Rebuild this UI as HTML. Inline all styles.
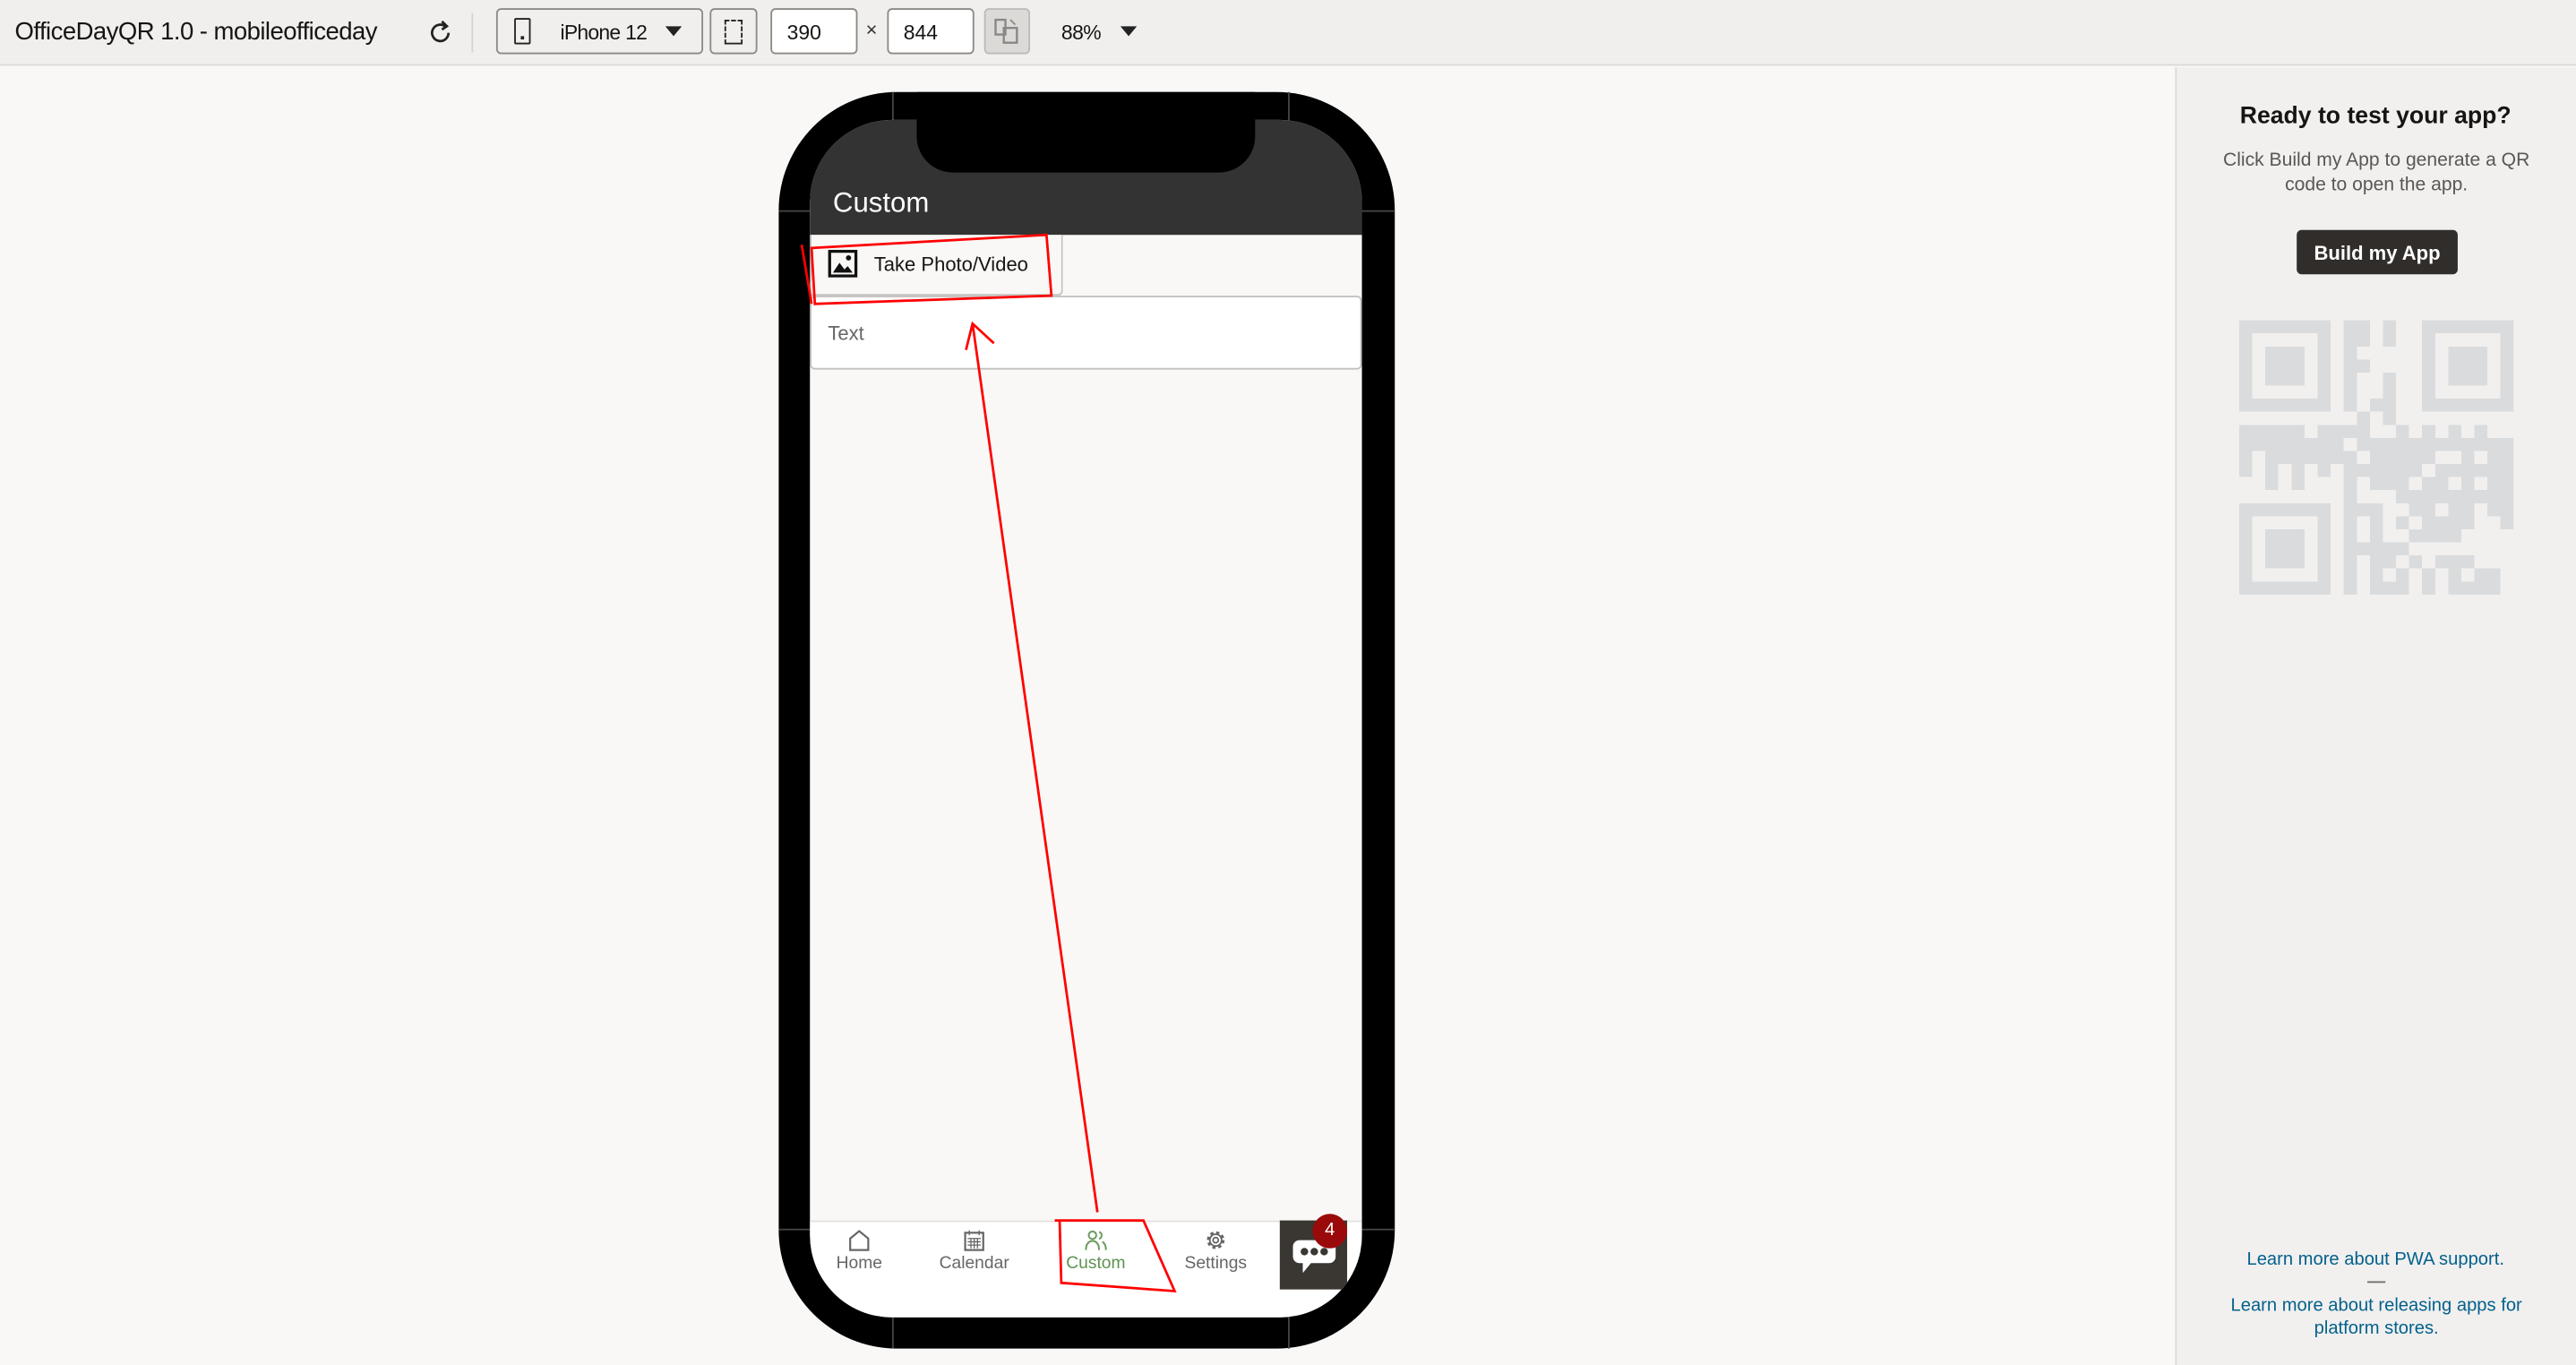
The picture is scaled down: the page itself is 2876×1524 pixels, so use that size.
<!DOCTYPE html>
<html><head><meta charset="utf-8"><style>
*{box-sizing:border-box;margin:0;padding:0}
body{width:2876px;height:1524px;overflow:hidden;background:#f9f8f6;font-family:"Liberation Sans",sans-serif}
#w{position:absolute;left:0;top:0;width:1568px;height:831px;transform:scale(1.83418,1.83393);transform-origin:0 0}
.a{position:absolute}
.bx{position:absolute;border:1px solid #8d8a86;border-radius:3px;background:#fff}
.tab{position:absolute;top:748px;width:70px;text-align:center;font-size:10.5px;color:#666}
.tab svg{display:block;margin:0 auto 1px}
</style></head><body><div id="w">
<!-- top bar -->
<div class="a" style="left:0;top:0;width:1568px;height:40px;background:#f0efee;border-bottom:1px solid #dcdad7"></div>
<div class="a" style="left:9px;top:11px;font-size:15px;color:#161513;letter-spacing:-0.3px">OfficeDayQR 1.0 - mobileofficeday</div>
<svg class="a" style="left:260px;top:12px" width="16" height="16" viewBox="0 0 16 16"><path d="M13 8a5 5 0 1 1-2-4" fill="none" stroke="#222" stroke-width="1.5"/><path d="M9 1l3 3-3 2" fill="none" stroke="#222" stroke-width="1.5"/></svg>
<div class="a" style="left:287px;top:8px;width:1px;height:24px;background:#d5d3d0"></div>
<div class="bx" style="left:302px;top:5px;width:126px;height:28px;background:#f0efee"></div>
<div class="a" style="left:313px;top:11px;width:10px;height:16px;border:1.5px solid #222;border-radius:1px"></div>
<div class="a" style="left:317px;top:22px;width:2px;height:2px;background:#222"></div>
<div class="a" style="left:341px;top:13px;font-size:12.5px;color:#161513;letter-spacing:-0.4px">iPhone 12</div>
<div class="a" style="left:405px;top:16px;border:5px solid transparent;border-top:6px solid #222;border-bottom:0"></div>
<div class="bx" style="left:432px;top:5px;width:29px;height:28px;background:#f0efee"></div>
<div class="a" style="left:441px;top:12px;width:11px;height:15px;border:1.5px dashed #222;border-bottom-style:solid"></div>
<div class="bx" style="left:469px;top:5px;width:53px;height:28px"></div>
<div class="a" style="left:479px;top:13px;font-size:12.5px;color:#161513">390</div>
<div class="a" style="left:527px;top:11px;font-size:12px;color:#333">×</div>
<div class="bx" style="left:540px;top:5px;width:53px;height:28px"></div>
<div class="a" style="left:550px;top:13px;font-size:12.5px;color:#161513">844</div>
<div class="bx" style="left:599px;top:5px;width:28px;height:28px;background:#dcdad7;border-color:#bbb"></div>
<svg class="a" style="left:605px;top:11px" width="16" height="16" viewBox="0 0 16 16"><path d="M1 1h6v9H1zM6 6h8v9H6z" fill="none" stroke="#888" stroke-width="1.3"/><path d="M10 1l3 3" stroke="#888"/></svg>
<div class="a" style="left:646px;top:13px;font-size:12.5px;color:#161513;letter-spacing:-0.3px">88%</div>
<div class="a" style="left:682px;top:16px;border:5px solid transparent;border-top:6px solid #222;border-bottom:0"></div>
<!-- right panel -->
<div class="a" style="left:1324px;top:41px;width:244px;height:790px;background:#f1f0ef;border-left:1px solid #dcdad7"></div>
<div class="a" style="left:1324px;top:63px;width:244px;text-align:center;font-size:14.5px;font-weight:bold;color:#161513">Ready to test your app?</div>
<div class="a" style="left:1340px;top:91px;width:213px;text-align:center;font-size:11.5px;line-height:15px;color:#5a5753">Click Build my App to generate a QR code to open the app.</div>
<div class="a" style="left:1398px;top:140px;width:98px;height:27px;background:#312d2a;border-radius:3px;color:#fff;font-size:12px;font-weight:bold;text-align:center;line-height:28px">Build my App</div>
<svg class="a" style="left:1363px;top:195px" width="167" height="167" viewBox="0 0 21 21" shape-rendering="crispEdges" fill="#dadbdd">
<path d="M0 0h7v7H0zM1 1v5h5V1zM2 2h3v3H2z" fill-rule="evenodd"/>
<path d="M14 0h7v7h-7zM15 1v5h5V1zM16 2h3v3h-3z" fill-rule="evenodd"/>
<path d="M0 14h7v7H0zM1 15v5h5v-5zM2 16h3v3H2z" fill-rule="evenodd"/>
<path d="M8 0h2v2h-1v1h-1zM11 0h1v2h-1zM8 3h2v1H8zM8 4h1v3H8zM11 4h1v4h-1zM10 6h1v1h-1zM9 7h1v1H9zM0 8h5v1H0zM6 8h4v1H6zM12 8h1v2h-2v-1h1zM14 8h1v1h-1zM16 8h1v1h-1zM18 8h1v1h-1zM0 9h8v1H0zM9 9h12v1H9zM0 10h1v2H0zM2 10h7v1H2zM10 10h5v1H10zM17 10h1v1h-1zM19 10h2v1h-2zM2 11h1v2H2zM4 11h1v2H4zM6 11h1v1H6zM8 11h6v1H8zM15 11h6v1h-6zM8 12h1v2H8zM10 12h3v1h-3zM14 12h2v1h-2zM17 12h1v1h-1zM19 12h2v1h-2zM12 13h9v1h-9zM8 14h3v1H8zM13 14h2v1h-2zM16 14h2v1h-2zM19 14h2v1h-2zM8 15h1v1H8zM10 15h1v1h-1zM12 15h1v1h-1zM14 15h4v1h-4zM20 15h1v1h-1zM8 16h1v5H8zM10 16h1v1h-1zM13 16h4v1h-4zM9 17h4v1H9zM10 18h2v1h-2zM13 18h1v1h-1zM15 18h3v1h-3zM10 19h1v1h-1zM12 19h1v2h-1zM14 19h1v2h-1zM16 19h1v1h-1zM18 19h2v1h-2zM10 20h2v1h-2zM16 20h4v1h-4z"/>
</svg>
<div class="a" style="left:1324px;top:761px;width:244px;text-align:center;font-size:11px;color:#04618c">Learn more about PWA support.</div>
<div class="a" style="left:1441px;top:780px;width:11px;height:1px;background:#6f6c68"></div>
<div class="a" style="left:1350px;top:789px;width:193px;text-align:center;font-size:11px;line-height:13.5px;color:#04618c">Learn more about releasing apps for platform stores.</div>
<!-- phone -->
<div class="a" style="left:474px;top:56px;width:375px;height:765px;background:#000;border-radius:72px"></div>
<div class="a" style="left:543px;top:56px;width:1px;height:765px;background:#444"></div>
<div class="a" style="left:784px;top:56px;width:1px;height:765px;background:#444"></div>
<div class="a" style="left:474px;top:128px;width:375px;height:1px;background:#444"></div>
<div class="a" style="left:474px;top:748px;width:375px;height:1px;background:#444"></div>
<div class="a" style="left:493px;top:73px;width:336px;height:729px;background:#f9f8f6;border-radius:50px;overflow:hidden">
  <div class="a" style="left:0;top:0;width:336px;height:70px;background:#333"></div>
  <div class="a" style="left:14px;top:41px;font-size:17px;color:#fff">Custom</div>
  <div class="a" style="left:0;top:70px;width:154px;height:37px;background:#f9f8f6;border:1px solid #c4c2bf;border-top:0;border-radius:0 0 3px 0"></div>
  <svg class="a" style="left:11px;top:79px" width="18" height="17" viewBox="0 0 18 17"><rect x="1" y="1" width="16" height="15" fill="none" stroke="#111" stroke-width="1.8"/><path d="M3 14l4-6 3 4 2-2 3 4z" fill="#111"/><circle cx="12.5" cy="5" r="1.6" fill="#111"/></svg>
  <div class="a" style="left:39px;top:81px;font-size:12px;color:#161513">Take Photo/Video</div>
  <div class="a" style="left:0;top:107px;width:336px;height:45px;background:#fff;border:1px solid #c4c2bf;border-radius:3px"></div>
  <div class="a" style="left:11px;top:123px;font-size:12px;color:#666">Text</div>
  <div class="a" style="left:0;top:670px;width:336px;height:60px;background:#fff;border-top:1px solid #e4e2df"></div>
  <div class="a" style="left:286px;top:670px;width:41px;height:42px;background:#3a3632"></div>
  <svg class="a" style="left:293px;top:680px" width="28" height="24" viewBox="0 0 28 24"><path d="M5 2h18a4 4 0 0 1 4 4v6a4 4 0 0 1-4 4H12l-5 6v-6H5a4 4 0 0 1-4-4V6a4 4 0 0 1 4-4z" fill="#fff"/><circle cx="8" cy="9" r="2.3" fill="#3a3632"/><circle cx="14" cy="9" r="2.3" fill="#3a3632"/><circle cx="20" cy="9" r="2.3" fill="#3a3632"/></svg>
  <div class="a" style="left:306px;top:666px;width:21px;height:21px;border-radius:50%;background:#9a0a0a;color:#fff;font-size:11px;text-align:center;line-height:21px">4</div>
</div>
<div class="a" style="left:558px;top:56px;width:206px;height:49px;background:#000;border-radius:0 0 22px 22px"></div>
<div class="tab" style="left:488px"><svg width="14" height="14" viewBox="0 0 14 14"><path d="M1.5 13V6L7 1.5 12.5 6v7z" fill="none" stroke="#666" stroke-width="1.2"/></svg>Home</div>
<div class="tab" style="left:558px"><svg width="14" height="14" viewBox="0 0 14 14"><rect x="1.5" y="2.5" width="11" height="10.5" fill="none" stroke="#666" stroke-width="1.2"/><path d="M4 1v3M10 1v3M3 6h8M3 8h8M3 10h8M5 6v6M7 6v6M9 6v6" stroke="#666" stroke-width=".7"/></svg>Calendar</div>
<div class="tab" style="left:632px;color:#5e9350"><svg width="14" height="14" viewBox="0 0 14 14"><circle cx="5" cy="4" r="2.3" fill="none" stroke="#6b9b5e" stroke-width="1.1"/><path d="M1 13c0-4 2-5.5 4-5.5s4 1.5 4 5.5" fill="none" stroke="#6b9b5e" stroke-width="1.1"/><path d="M9 2a2.2 2.2 0 0 1 0 4.2M11 8c1.5.8 2.2 2.4 2.2 5" fill="none" stroke="#6b9b5e" stroke-width="1.1"/></svg>Custom</div>
<div class="tab" style="left:705px"><svg width="14" height="14" viewBox="0 0 14 14"><circle cx="7" cy="7" r="4.3" fill="none" stroke="#666" stroke-width="2.2" stroke-dasharray="1.8 1.6"/><circle cx="7" cy="7" r="3.6" fill="none" stroke="#666" stroke-width="1"/><circle cx="7" cy="7" r="1.6" fill="none" stroke="#666" stroke-width="1"/></svg>Settings</div>
<!-- annotations -->
<svg class="a" style="left:0;top:0" width="1568" height="831" fill="none" stroke="#f00" stroke-width="1.5">
<path d="M494 151L637 143L640 180L496 185z"/>
<path d="M488 149L494 185"/>
<path d="M668 738L592 197M588 213L592 197L605 209"/>
<path d="M642 743L696 743L715 786L646 781L645 743"/>
</svg>
</div></body></html>
